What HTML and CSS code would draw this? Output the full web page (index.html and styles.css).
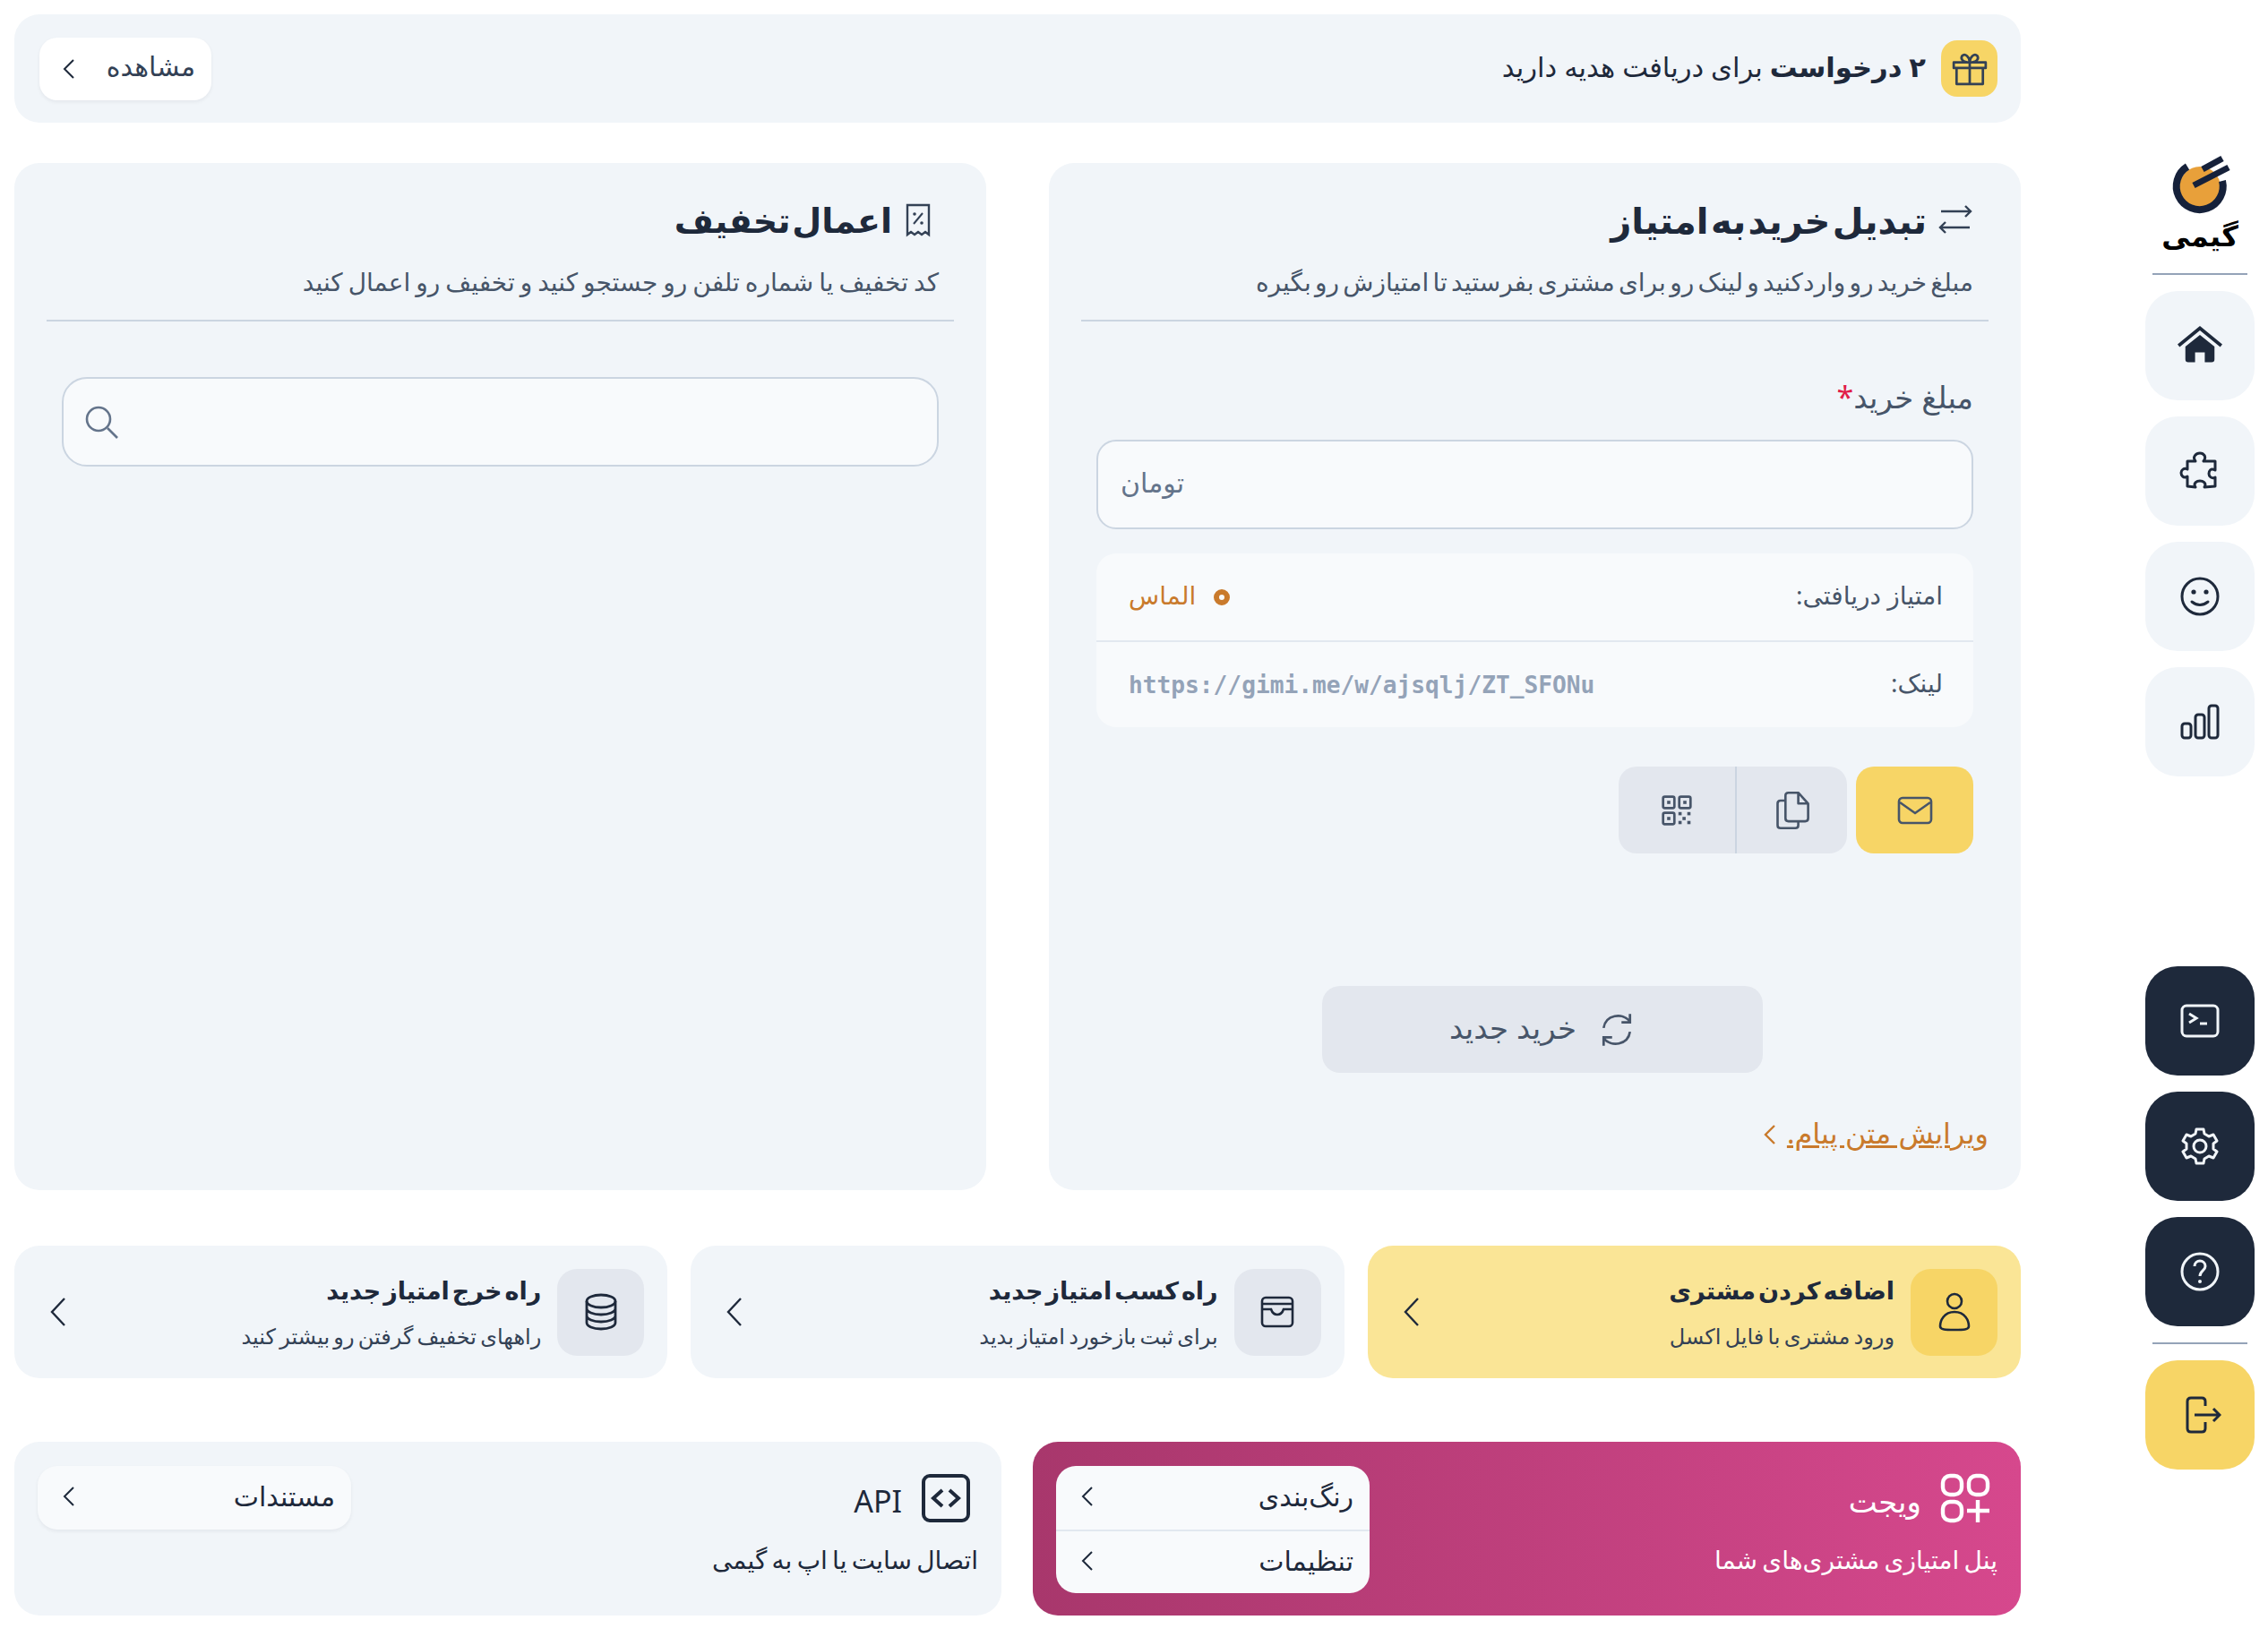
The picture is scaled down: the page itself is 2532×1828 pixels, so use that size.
FILE: index.html
```html
<!DOCTYPE html>
<html lang="fa" dir="rtl">
<head>
	<meta charset="utf-8">
	<title>گیمی</title>
	<link rel="stylesheet" href="styles.css">
</head>
<body>
<div class="page">
	<aside class="side">
		<div class="side-top">
			<div class="logo">
				<svg class="logo-mark" viewBox="0 0 100 80" width="100" height="80">
					<circle cx="50" cy="44" r="23" fill="#e8a03a"/>
					<path d="M36 21 A26 26 0 1 0 75 37" fill="none" stroke="#16213a" stroke-width="8"/>
					<path d="M53 24 L75 12 M43 42 L82 22" stroke="#16213a" stroke-width="7" fill="none"/>
				</svg>
				<span class="logo-text">گیمی</span>
			</div>
			<div class="side-line"></div>
			<a class="side-btn">
				<svg class="ico home" viewBox="0 0 48 48"><path d="M2 24 L24 6 L46 24" fill="none" stroke="#1e293b" stroke-width="3.4"/><path d="M9 25 L24 13 L39 25 V38 Q39 41 36 41 H29 V31 H19 V41 H12 Q9 41 9 38 Z" fill="#1e293b"/></svg>
			</a>
			<a class="side-btn">
				<svg class="ico" viewBox="0 0 48 48"><path d="M19 13 C15 8 20 4 24 4 C28 4 32 8 28 13 H41 V23 C36 20 34 24 34 27 C34 30 37 33 41 31 V41 L29 42 C32 37 27 35 24 35 C21 35 16 37 19 42 L10 41 V30 C5 33 3 28 3 26 C3 23 6 20 10 22 V13 Z" fill="none" stroke="#1e293b" stroke-width="3" stroke-linejoin="round"/></svg>
			</a>
			<a class="side-btn">
				<svg class="ico" viewBox="0 0 48 48"><circle cx="24" cy="24" r="20" fill="none" stroke="#1e293b" stroke-width="3"/><circle cx="17" cy="19" r="2.6" fill="#1e293b"/><circle cx="31" cy="19" r="2.6" fill="#1e293b"/><path d="M15 30 Q24 37 33 30" fill="none" stroke="#1e293b" stroke-width="3" stroke-linecap="round"/></svg>
			</a>
			<a class="side-btn">
				<svg class="ico" viewBox="0 0 48 48"><rect x="4" y="26" width="10" height="16" rx="3" fill="none" stroke="#1e293b" stroke-width="3"/><rect x="19" y="16" width="10" height="26" rx="3" fill="none" stroke="#1e293b" stroke-width="3"/><rect x="34" y="6" width="10" height="36" rx="3" fill="none" stroke="#1e293b" stroke-width="3"/></svg>
			</a>
		</div>
		<div class="side-bottom">
			<a class="side-btn dark">
				<svg class="ico" viewBox="0 0 48 48"><rect x="4" y="7" width="40" height="34" rx="5" fill="none" stroke="#f1f5f9" stroke-width="3"/><path d="M12 16 L20 21 L12 26 M24 27 H32" fill="none" stroke="#f1f5f9" stroke-width="3"/></svg>
			</a>
			<a class="side-btn dark">
				<svg class="ico" viewBox="0 0 48 48"><circle cx="24" cy="24" r="7" fill="none" stroke="#f1f5f9" stroke-width="3"/><path d="M20 5 H28 L29 10 L34 13 L39 11 L43 18 L39 21 V27 L43 30 L39 37 L34 35 L29 38 L28 43 H20 L19 38 L14 35 L9 37 L5 30 L9 27 V21 L5 18 L9 11 L14 13 L19 10 Z" fill="none" stroke="#f1f5f9" stroke-width="3" stroke-linejoin="round"/></svg>
			</a>
			<a class="side-btn dark">
				<svg class="ico" viewBox="0 0 48 48"><circle cx="24" cy="24" r="20" fill="none" stroke="#f1f5f9" stroke-width="3"/><path d="M18 18 C18 10 30 10 30 18 C30 23 24 23 24 29" fill="none" stroke="#f1f5f9" stroke-width="3"/><circle cx="24" cy="35" r="2" fill="#f1f5f9"/></svg>
			</a>
			<div class="side-line"></div>
			<a class="side-btn yellow">
				<svg class="ico" viewBox="0 0 48 48"><path d="M30 14 V9 Q30 5 26 5 H14 Q10 5 10 9 V39 Q10 43 14 43 H26 Q30 43 30 39 V32" fill="none" stroke="#1e293b" stroke-width="3"/><path d="M18 24 H46 M39 17 L46 24 L39 31" fill="none" stroke="#1e293b" stroke-width="3"/></svg>
			</a>
		</div>
	</aside>

	<main class="main">
		<section class="banner">
			<div class="banner-text">
				<span class="gift">
					<svg viewBox="0 0 40 40" width="42" height="42"><path d="M3 13 H37 V19 H3 Z M6 19 V36 H34 V19 M20 13 V36 M20 13 C12 13 10 9 12 6 C15 3 20 7 20 13 C20 7 25 3 28 6 C30 9 28 13 20 13" fill="none" stroke="#334155" stroke-width="2.6" stroke-linejoin="round"/></svg>
				</span>
				<span class="banner-msg"><b>۲ درخواست</b> برای دریافت هدیه دارید</span>
			</div>
			<a class="btn-white">
				<span>مشاهده</span>
				<svg class="chev" viewBox="0 0 14 24"><path d="M12 2 L2 12 L12 22" fill="none" stroke="#1e293b" stroke-width="2"/></svg>
			</a>
		</section>

		<div class="two-cols">
			<section class="card">
				<div class="card-head">
					<h2>
						<svg class="head-ico" viewBox="0 0 40 40"><path d="M4 10 L36 10 M31 4 L37 10 L31 16 M36 28 L4 28 M9 22 L3 28 L9 34" fill="none" stroke="#334155" stroke-width="2.4"/></svg>
						تبدیل خرید به امتیاز
					</h2>
					<p>مبلغ خرید رو واردکنید و لینک رو برای مشتری بفرستید تا امتیازش رو بگیره</p>
				</div>
				<div class="form">
					<label class="label">مبلغ خرید<span class="req">*</span></label>
					<input class="field" type="text" placeholder="تومان" dir="rtl">
					<div class="info">
						<div class="info-row">
							<span>امتیاز دریافتی:</span>
							<span class="level"><i class="dot"></i>الماس</span>
						</div>
						<div class="info-row">
							<span>لینک:</span>
							<span class="url" dir="ltr">https://gimi.me/w/ajsqlj/ZT_SFONu</span>
						</div>
					</div>
					<div class="actions">
						<a class="act yellow">
							<svg viewBox="0 0 40 40" width="40" height="40"><rect x="2" y="6" width="36" height="28" rx="4" fill="none" stroke="#475569" stroke-width="2.6"/><path d="M3 11 L20 23 L37 11" fill="none" stroke="#475569" stroke-width="2.6"/></svg>
						</a>
						<div class="act-group">
							<a class="act-part copy">
								<svg viewBox="0 0 40 40" width="44" height="44"><path d="M16 2 H26 L36 13 V28 Q36 31 33 31 H16 Q13 31 13 28 V5 Q13 2 16 2 Z M26 2 V13 H36 M13 10 H8 Q5 10 5 13 V35 Q5 38 8 38 H23 Q26 38 26 35 V31" fill="none" stroke="#475569" stroke-width="2.4" stroke-linejoin="round"/></svg>
							</a>
							<a class="act-part qr">
								<svg viewBox="0 0 40 40" width="36" height="36"><g fill="none" stroke="#475569" stroke-width="3"><rect x="3" y="3" width="14" height="14" rx="2"/><rect x="23" y="3" width="14" height="14" rx="2"/><rect x="3" y="23" width="14" height="14" rx="2"/></g><g fill="#475569"><rect x="8" y="8" width="4" height="4"/><rect x="28" y="8" width="4" height="4"/><rect x="8" y="28" width="4" height="4"/><rect x="22" y="22" width="4" height="4"/><rect x="33" y="22" width="4" height="4"/><rect x="27" y="28" width="4" height="4"/><rect x="22" y="33" width="4" height="4"/><rect x="33" y="33" width="4" height="4"/></g></svg>
							</a>
						</div>
					</div>
					<a class="btn-new">
						<svg viewBox="0 0 40 40" width="42" height="42"><path d="M6 18 C8 4 26 1 34 11 M34 3 V12 H25 M34 22 C32 36 14 39 6 29 M6 37 V28 H15" fill="none" stroke="#475569" stroke-width="2.6"/></svg>
						<span>خرید جدید</span>
					</a>
					<a class="edit-link">
						<span>ویرایش متن پیام.</span>
						<svg class="chev" viewBox="0 0 14 24"><path d="M12 2 L2 12 L12 22" fill="none" stroke="#c97a2c" stroke-width="2.4"/></svg>
					</a>
				</div>
			</section>

			<section class="card">
				<div class="card-head">
					<h2>
						<svg class="head-ico narrow" viewBox="0 0 30 40"><path d="M3 3 H27 V36 L23 33 L19 36 L15 33 L11 36 L7 33 L3 36 Z" fill="none" stroke="#334155" stroke-width="2.4"/><path d="M10 24 L20 12" stroke="#334155" stroke-width="2"/><circle cx="11" cy="13" r="1.8" fill="#334155"/><circle cx="19" cy="23" r="1.8" fill="#334155"/></svg>
						اعمال تخفیف
					</h2>
					<p>کد تخفیف یا شماره تلفن رو جستجو کنید و تخفیف رو اعمال کنید</p>
				</div>
				<div class="search">
					<svg viewBox="0 0 40 40" width="40" height="40"><circle cx="17" cy="17" r="13" fill="none" stroke="#64748b" stroke-width="2.6"/><path d="M27 27 L38 38" stroke="#64748b" stroke-width="2.6"/></svg>
				</div>
			</section>
		</div>

		<div class="row-links">
			<a class="link-card gold">
				<span class="link-ico">
					<svg viewBox="0 0 40 48" width="40" height="48"><circle cx="20" cy="12" r="8" fill="none" stroke="#1e293b" stroke-width="2.6"/><path d="M20 24 C8 24 4 34 4 40 C4 44 10 44 20 44 C30 44 36 44 36 40 C36 34 32 24 20 24 Z" fill="none" stroke="#1e293b" stroke-width="2.6"/></svg>
				</span>
				<span class="link-text"><b>اضافه کردن مشتری</b><small>ورود مشتری با فایل اکسل</small></span>
				<svg class="chev-big" viewBox="0 0 18 34"><path d="M16 2 L2 17 L16 32" fill="none" stroke="#1e293b" stroke-width="2.4"/></svg>
			</a>
			<a class="link-card">
				<span class="link-ico">
					<svg viewBox="0 0 40 40" width="40" height="40"><rect x="3" y="4" width="34" height="32" rx="4" fill="none" stroke="#1e293b" stroke-width="2.6"/><path d="M3 11 H37 M3 17 H13 Q15 23 20 23 Q25 23 27 17 H37" fill="none" stroke="#1e293b" stroke-width="2.6"/></svg>
				</span>
				<span class="link-text"><b>راه کسب امتیاز جدید</b><small>برای ثبت بازخورد امتیاز بدید</small></span>
				<svg class="chev-big" viewBox="0 0 18 34"><path d="M16 2 L2 17 L16 32" fill="none" stroke="#1e293b" stroke-width="2.4"/></svg>
			</a>
			<a class="link-card">
				<span class="link-ico">
					<svg viewBox="0 0 40 44" width="40" height="44"><g fill="none" stroke="#1e293b" stroke-width="2.8"><ellipse cx="20" cy="10" rx="16" ry="7"/><path d="M4 10 V34 C4 38 11 41 20 41 C29 41 36 38 36 34 V10 M4 18 C4 22 11 25 20 25 C29 25 36 22 36 18 M4 26 C4 30 11 33 20 33 C29 33 36 30 36 26"/></g></svg>
				</span>
				<span class="link-text"><b>راه خرج امتیاز جدید</b><small>راههای تخفیف گرفتن رو بیشتر کنید</small></span>
				<svg class="chev-big" viewBox="0 0 18 34"><path d="M16 2 L2 17 L16 32" fill="none" stroke="#1e293b" stroke-width="2.4"/></svg>
			</a>
		</div>

		<div class="row-tools">
			<section class="tool widget">
				<div class="tool-info">
					<div class="tool-title">
						<svg viewBox="0 0 56 56" width="56" height="56"><g fill="none" stroke="#fff" stroke-width="4.4"><rect x="3" y="3" width="21" height="21" rx="8"/><rect x="32" y="3" width="21" height="21" rx="8"/><rect x="3" y="32" width="21" height="21" rx="8"/><path d="M42 30 V55 M30 42 H55"/></g></svg>
						<span>ویجت</span>
					</div>
					<p>پنل امتیازی مشتری‌های شما</p>
				</div>
				<div class="tool-list">
					<a class="tool-item"><span>رنگ‌بندی</span><svg class="chev" viewBox="0 0 14 24"><path d="M12 2 L2 12 L12 22" fill="none" stroke="#1e293b" stroke-width="2"/></svg></a>
					<a class="tool-item"><span>تنظیمات</span><svg class="chev" viewBox="0 0 14 24"><path d="M12 2 L2 12 L12 22" fill="none" stroke="#1e293b" stroke-width="2"/></svg></a>
				</div>
			</section>
			<section class="tool api">
				<div class="tool-info">
					<div class="tool-title">
						<svg viewBox="0 0 56 56" width="56" height="56"><rect x="3" y="3" width="50" height="50" rx="7" fill="none" stroke="#1e293b" stroke-width="4"/><path d="M24 19 L14 28 L24 37 M32 19 L42 28 L32 37" fill="none" stroke="#1e293b" stroke-width="4"/></svg>
						<span>API</span>
					</div>
					<p>اتصال سایت یا اپ به گیمی</p>
				</div>
				<div class="tool-list one">
					<a class="tool-item"><span>مستندات</span><svg class="chev" viewBox="0 0 14 24"><path d="M12 2 L2 12 L12 22" fill="none" stroke="#1e293b" stroke-width="2"/></svg></a>
				</div>
			</section>
		</div>
	</main>
</div>
</body>
</html>
```

FILE: styles.css
```css
* {
	box-sizing: border-box;
}

body {
	margin: 0;
	background: #ffffff;
	color: #1e293b;
	font-family: "Noto Sans", "DejaVu Sans", sans-serif;
	font-size: 28px;
}

a {
	text-decoration: none;
	color: inherit;
}

.page {
	display: flex;
	width: 2532px;
	height: 1828px;
	padding: 16px 15px 0 16px;
	gap: 139px;
}

/* sidebar */
.side {
	width: 122px;
	height: 1625px;
	display: flex;
	flex-direction: column;
	justify-content: space-between;
}

.side-top, .side-bottom {
	display: flex;
	flex-direction: column;
	gap: 18px;
}

.side-top {
	padding-top: 149px;
}

.logo {
	display: flex;
	flex-direction: column;
	align-items: center;
	height: 120px;
	margin-bottom: 2px;
}

.logo-text {
	font-weight: 700;
	font-size: 32px;
	line-height: 36px;
	color: #000000;
}

.side-line {
	height: 2px;
	margin: 0 8px;
	background: #94a3b8;
}

.side-btn {
	height: 122px;
	border-radius: 36px;
	background: #f1f5f9;
	display: flex;
	align-items: center;
	justify-content: center;
}

.side-btn.dark {
	background: #1e293b;
}

.side-btn.yellow {
	background: #f7d566;
}

.ico {
	width: 48px;
	height: 48px;
}

.ico.home {
	width: 52px;
	height: 52px;
}

/* main column */
.main {
	width: 2240px;
}

.banner {
	height: 121px;
	padding: 0 26px 0 28px;
	border-radius: 28px;
	background: #f1f5f9;
	display: flex;
	align-items: center;
	justify-content: space-between;
}

.banner-text {
	display: flex;
	align-items: center;
	gap: 17px;
	font-size: 30.6px;
}

.banner-msg {
	padding-bottom: 6px;
}

.gift {
	width: 63px;
	height: 63px;
	border-radius: 18px;
	background: #f7d566;
	display: flex;
	align-items: center;
	justify-content: center;
}

.btn-white {
	width: 192px;
	height: 70px;
	padding: 0 18px 0 26px;
	border-radius: 20px;
	background: #ffffff;
	box-shadow: 0 2px 4px rgba(15, 23, 42, 0.06);
	display: flex;
	align-items: center;
	justify-content: space-between;
	color: #334155;
	font-size: 30px;
}

.btn-white span {
	padding-bottom: 6px;
}

.chev {
	width: 14px;
	height: 24px;
	flex: none;
}

.two-cols {
	display: flex;
	gap: 70px;
	margin-top: 45px;
}

.card {
	width: 1085px;
	height: 1147px;
	padding: 32px 36px;
	border-radius: 28px;
	background: #f1f5f9;
}

.card-head {
	padding: 0 17px 23px;
	border-bottom: 2px solid #cbd5e1;
}

.card-head h2 {
	margin: 0;
	font-size: 40px;
	line-height: 63px;
	font-weight: 700;
	word-spacing: -8px;
	display: flex;
	align-items: center;
	gap: 12px;
}

.card-head p {
	margin: 17px 0 0;
	font-size: 28px;
	line-height: 40px;
	word-spacing: -3px;
	color: #475569;
}

.card + .card h2 {
	font-size: 38px;
}

.card + .card p {
	word-spacing: -1.3px;
}

.head-ico {
	width: 40px;
	height: 40px;
}

.head-ico.narrow {
	width: 34px;
	margin-right: 6px;
}

.form {
	padding: 0 17px;
}

.label {
	display: block;
	margin-top: 64px;
	font-size: 34px;
	line-height: 40px;
	color: #475569;
}

.req {
	color: #e11d48;
}

.field {
	display: block;
	width: 100%;
	height: 100px;
	margin-top: 28px;
	padding: 0 25px 6px;
	border: 2px solid #cbd5e1;
	border-radius: 22px;
	background: #f8fafc;
	font-family: inherit;
	font-size: 30px;
	text-align: left;
}

.field::placeholder {
	color: #64748b;
}

.info {
	margin-top: 27px;
	border-radius: 22px;
	background: #f8fafc;
}

.info-row {
	height: 97px;
	padding: 0 34px 5px 36px;
	display: flex;
	align-items: center;
	justify-content: space-between;
	color: #475569;
}

.info-row + .info-row {
	border-top: 2px solid #e2e8f0;
}

.level {
	display: flex;
	align-items: center;
	gap: 20px;
	color: #c97a2c;
}

.dot {
	width: 18px;
	height: 18px;
	margin-top: 6px;
	border-radius: 50%;
	border: 6px solid #c97a2c;
	background: #f8fafc;
}

.url {
	padding-top: 5px;
	font-family: "DejaVu Sans Mono", monospace;
	font-weight: 700;
	font-size: 26.2px;
	color: #94a3b8;
}

.actions {
	display: flex;
	gap: 10px;
	margin-top: 44px;
}

.act {
	width: 131px;
	height: 97px;
	border-radius: 20px;
	display: flex;
	align-items: center;
	justify-content: center;
}

.act.yellow {
	background: #f7d566;
}

.act-group {
	display: flex;
	width: 255px;
	height: 97px;
	border-radius: 20px;
	background: #e3e7ee;
}

.act-part {
	display: flex;
	align-items: center;
	justify-content: center;
}

.act-part.copy {
	width: 123px;
}

.act-part.qr {
	width: 132px;
	border-right: 2px solid #cbd5e1;
}

.btn-new {
	width: 492px;
	height: 97px;
	margin: 148px 235px 0 0;
	border-radius: 20px;
	background: #e3e7ee;
	color: #475569;
	font-size: 34px;
	display: flex;
	align-items: center;
	justify-content: center;
	gap: 24px;
}

.btn-new span {
	padding-bottom: 6px;
}

.edit-link {
	margin: 47px -17px 0 0;
	display: flex;
	align-items: center;
	gap: 12px;
	font-size: 32px;
	line-height: 40px;
	color: #c97a2c;
}

.edit-link span {
	text-decoration: underline;
	padding-bottom: 4px;
}

.search {
	height: 100px;
	margin: 62px 17px 0;
	padding: 0 22px;
	border: 2px solid #cbd5e1;
	border-radius: 28px;
	background: #f8fafc;
	display: flex;
	align-items: center;
	justify-content: flex-end;
}

/* link cards */
.row-links {
	display: flex;
	gap: 26px;
	margin-top: 62px;
}

.link-card {
	flex: 1;
	height: 148px;
	padding: 25px 26px;
	border-radius: 28px;
	background: #f1f5f9;
	display: flex;
	align-items: center;
	gap: 18px;
}

.link-card.gold {
	background: #fae596;
}

.link-ico {
	width: 97px;
	height: 97px;
	flex: none;
	border-radius: 22px;
	background: #e3e7ee;
	display: flex;
	align-items: center;
	justify-content: center;
}

.gold .link-ico {
	background: #f7d566;
}

.link-text {
	flex: 1;
	display: flex;
	flex-direction: column;
	gap: 12px;
}

.link-text b {
	font-size: 27px;
	line-height: 42px;
	word-spacing: -4px;
}

.link-text small {
	font-size: 24px;
	line-height: 36px;
	word-spacing: -2px;
	color: #334155;
}

.chev-big {
	width: 18px;
	height: 34px;
	margin-left: 14px;
	flex: none;
}

/* bottom tools */
.row-tools {
	display: flex;
	gap: 35px;
	margin-top: 71px;
}

.tool {
	height: 194px;
	padding: 27px 26px;
	border-radius: 28px;
	background: #f1f5f9;
	display: flex;
	justify-content: space-between;
	align-items: flex-start;
}

.widget {
	width: 1103px;
	background: linear-gradient(90deg, #a8376c, #d6488d);
	color: #ffffff;
}

.api {
	width: 1102px;
}

.tool-title {
	display: flex;
	align-items: center;
	gap: 21px;
	margin: 8px 8px 0 0;
	font-size: 34px;
	height: 56px;
}

.tool-title span {
	padding-top: 6px;
}

.tool-info p {
	margin: 20px 0 0;
	font-size: 28px;
	line-height: 40px;
	word-spacing: -2px;
}

.tool-list {
	width: 350px;
	border-radius: 22px;
	background: #f8fafc;
	color: #1e293b;
}

.tool-list.one {
	box-shadow: 0 2px 4px rgba(15, 23, 42, 0.06);
}

.tool-item {
	height: 71px;
	padding: 0 18px 4px 28px;
	display: flex;
	align-items: center;
	justify-content: space-between;
	font-size: 30px;
}

.tool-item + .tool-item {
	border-top: 2px solid #e2e8f0;
}
```
